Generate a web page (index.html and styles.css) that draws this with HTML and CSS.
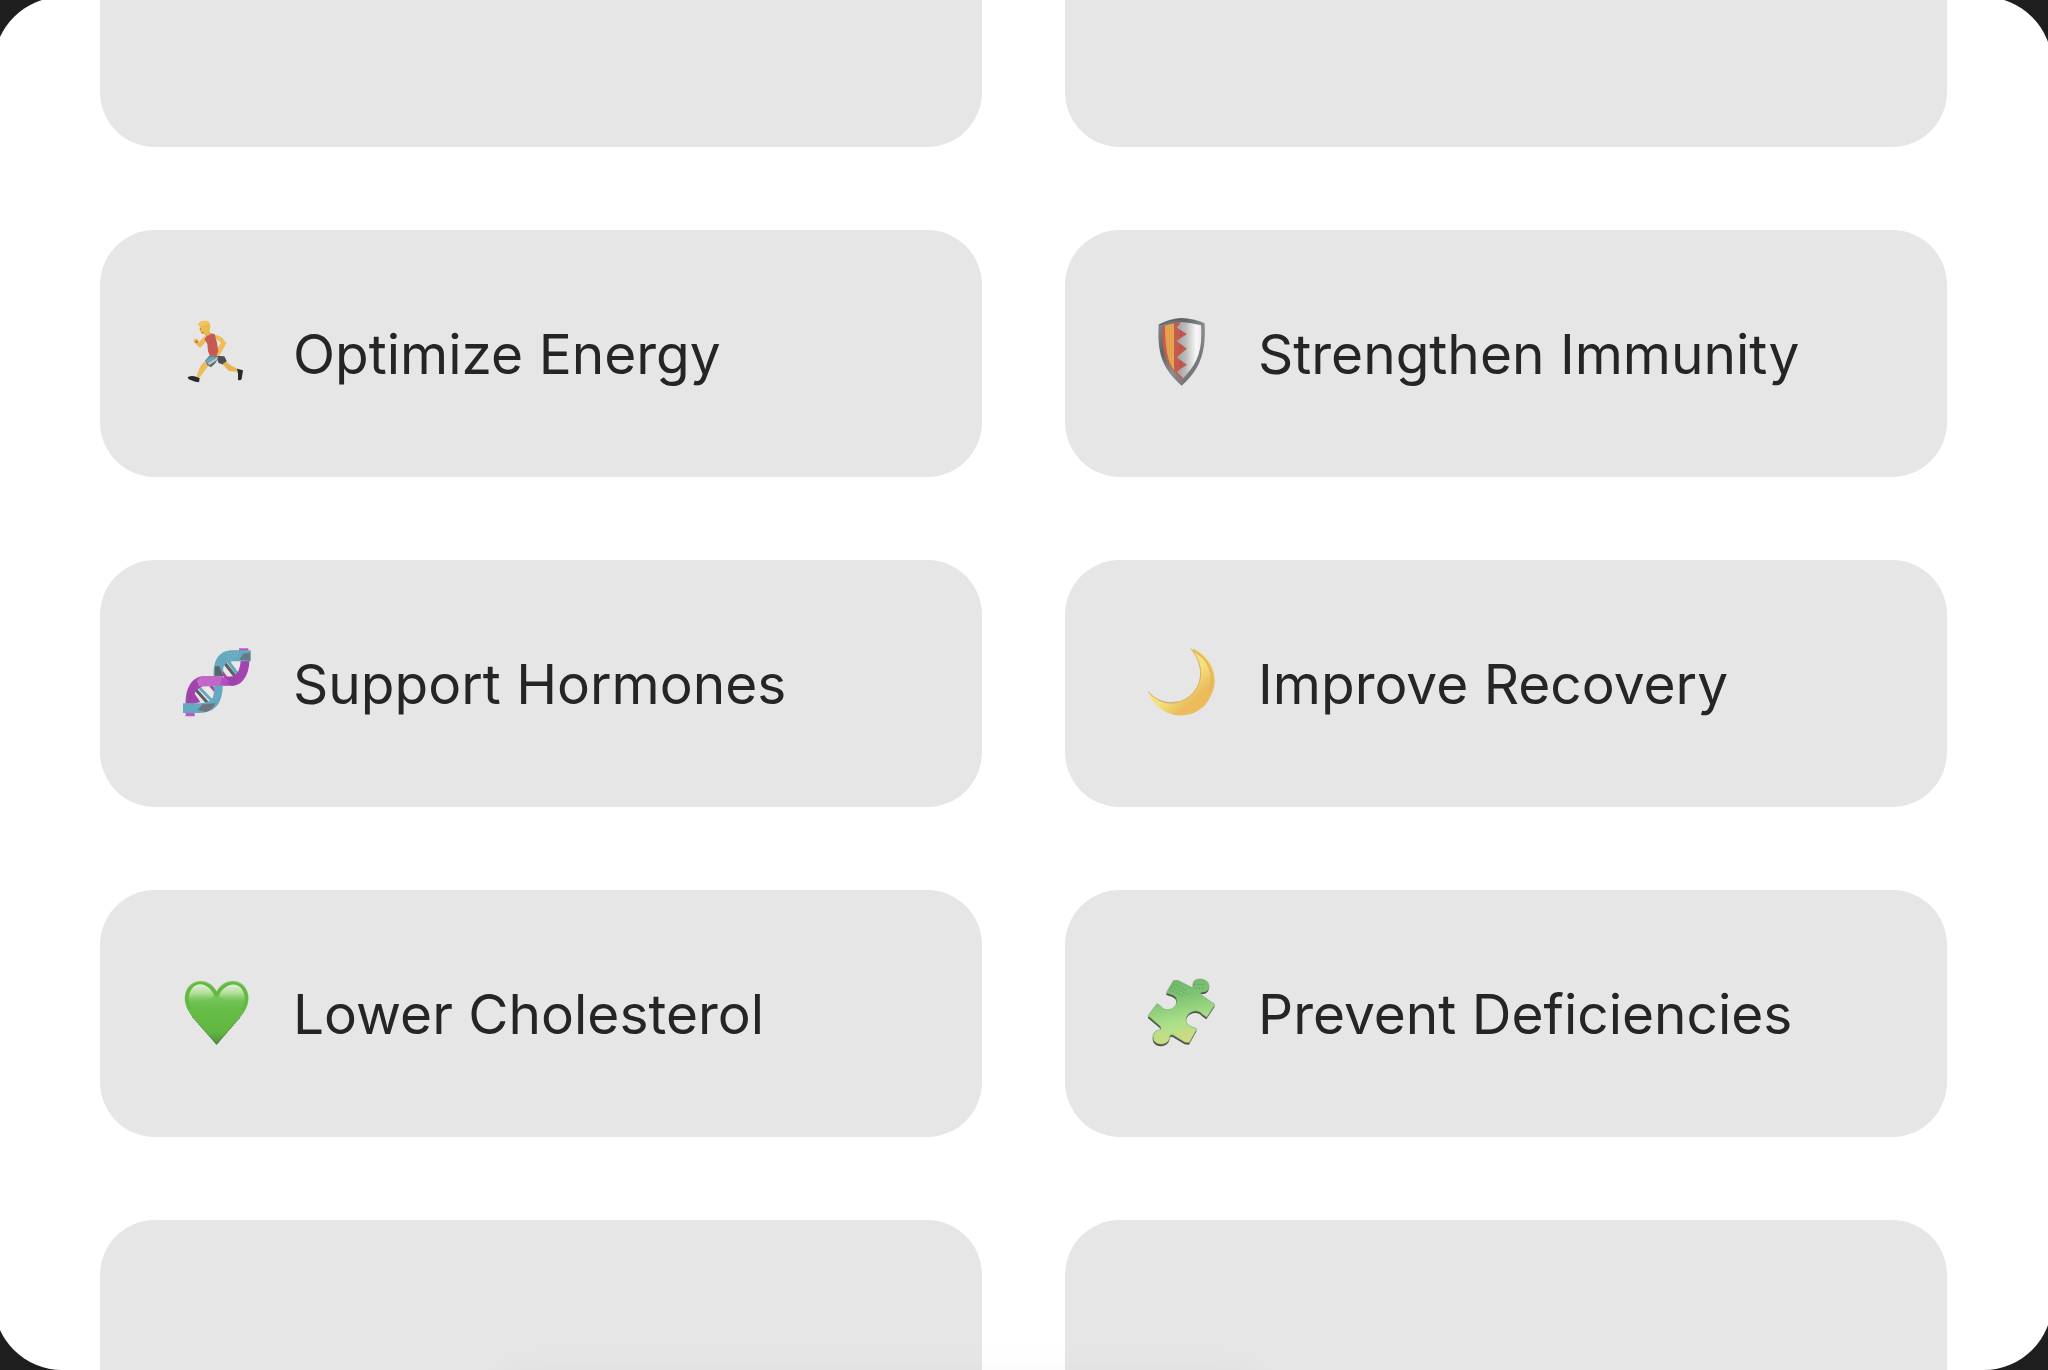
FILE: index.html
```html
<!DOCTYPE html>
<html lang="en">
    <head>
        <meta charset="UTF-8">
        <title>Health Goals</title>
        <link rel="stylesheet" href="styles.css">
    </head>
    <body>
        <main class="panel">
            <div class="goal"></div>
            <div class="goal"></div>

            <button class="goal" type="button">
                <svg class="icon" viewBox="66 52 222 222" aria-hidden="true">
                    <path d="M168 168 L193 170 L200 184 L193 196 L176 190 Z" fill="#4c4e51"/>
                    <path d="M187 193 L199 186 L214 198 L234 208 L231 216 L207 214 Z" fill="#e9b44f"/>
                    <path d="M231 207 L249 212 L245 238 Q240 244 234 240 L234 222 Z" fill="#28292b"/>
                    <path d="M132 186 L148 196 L136 210 L120 233 L110 231 Q116 202 132 186 Z" fill="#edbc58"/>
                    <path d="M83 232 Q96 227 108 231 L119 235 L117 248 L106 246 L86 239 Z" fill="#28292b"/>
                    <path d="M135 184 L148 168 L176 168 Q174 185 153 203 L142 196 Z" fill="#606468"/>
                    <path d="M136 185 L149 171 L170 170 L143 192 Z" fill="#65a9be"/>
                    <path d="M143 191 L174 170 L171 181 L148 197 Z" fill="#b9c3c8"/>
                    <path d="M137 116 L135 129 L121 144 Q113 142 108 132 L101 126 Q99 119 105 117 L114 119 L116 128 L134 110 Z" fill="#edb956"/>
                    <path d="M105 126 L111 122 L114 128 L108 131 Z" fill="#c85c4e"/>
                    <path d="M160 105 Q185 105 199 130 L188 151 L178 168 L170 164 L174 142 L183 130 L168 118 Z" fill="#efbd5a"/>
                    <path d="M138 108 Q151 98 164 104 L171 129 L175 155 L169 169 L149 168 L144 154 L142 133 L134 120 Z" fill="#c55b52"/>
                    <path d="M132 101 L148 95 L153 103 L138 111 Z" fill="#e5ac50"/>
                    <path d="M114 73 Q125 60 142 64 Q151 69 151 82 L148 99 Q139 107 130 103 Q121 101 119 88 L120 80 Q114 79 114 73 Z" fill="#edb952"/>
                    <path d="M115 74 Q126 62 142 65 L146 73 Q136 79 120 80 Z" fill="#f2c75c"/>
                    <path d="M121 86v4M125 99h5" stroke="#a84b55" stroke-width="3"/>
                </svg>
                <span>Optimize Energy</span>
            </button>
            <button class="goal" type="button">
                <svg class="icon" viewBox="50 52 222 222" aria-hidden="true">
                    <defs>
                        <linearGradient id="rim" x1="0" y1="0" x2="1" y2="1">
                            <stop offset="0" stop-color="#8c8f90"/>
                            <stop offset=".3" stop-color="#5f6466"/>
                            <stop offset=".55" stop-color="#8b8e8f"/>
                            <stop offset="1" stop-color="#595d60"/>
                        </linearGradient>
                        <linearGradient id="steel">
                            <stop offset="0" stop-color="#9c9c9c"/>
                            <stop offset=".35" stop-color="#bdbdbd"/>
                            <stop offset=".7" stop-color="#f8f8f8"/>
                            <stop offset="1" stop-color="#e0e0e0"/>
                        </linearGradient>
                        <clipPath id="shieldFace">
                            <path d="M154 67 Q127 69 97 80 C91 151 104 190 154 240 C199 197 218 154 212 77 Q184 70 154 67 Z"/>
                        </clipPath>
                    </defs>
                    <path d="M154 55 Q119 56 85 74 C81 154 91 204 154 258 C216 203 226 149 223 71 Q188 56 154 55 Z" fill="url(#rim)"/>
                    <path d="M154 58 Q121 59 88 76" fill="none" stroke="#555b5e" stroke-width="3"/>
                    <g clip-path="url(#shieldFace)">
                        <path d="M135 60h90v190h-90z" fill="url(#steel)"/>
                        <path d="M80 60 L158 60 L139 84 L170 103 L139 124 L170 147 L139 173 L170 195 L139 216 L165 242 H80 Z" fill="#c55b50"/>
                        <path d="M104 76 Q117 71 131 71 L131 212 Q104 180 104 76 Z" fill="#e6a84f"/>
                        <path d="M110 75v112M117 73v128M124 72v137" stroke="#d6804f" stroke-width="2" stroke-dasharray="3 3"/>
                        <path d="M151 94v17M151 138v16M151 187v15" stroke="#704d50" stroke-width="3" stroke-dasharray="3 3"/>
                    </g>
                </svg>
                <span>Strengthen Immunity</span>
            </button>

            <button class="goal" type="button">
                <svg class="icon" viewBox="66 50 222 222" aria-hidden="true">
                    <path d="M237 54h28v14h-28zM77 244h27v14H77z" fill="#bd59c5"/>
                    <path d="M108 170 L189 138 L190 210 L135 226 Z M188 99 L218 88 L244 93 L242 137 L190 140 Z" fill="#e9e9ea"/>
                    <path d="M189 92 L224 136" stroke="#5e6263" stroke-width="10"/>
                    <path d="M204 92 L235 134" stroke="#65a9c1" stroke-width="9"/>
                    <path d="M180 116 L199 143" stroke="#a942b4" stroke-width="9"/>
                    <path d="M103 173 L145 220" stroke="#595d60" stroke-width="9"/>
                    <path d="M119 173 L160 216" stroke="#65a9c1" stroke-width="9"/>
                    <path d="M152 166 L174 191" stroke="#a942b4" stroke-width="9"/>
                    <path d="M242 92 L268 87 C269 126 252 164 218 167 L185 164 L194 139 L220 138 Q240 127 242 92 Z" fill="#a343ad"/>
                    <path d="M77 220 C76 172 97 139 131 138 L187 138 L205 166 L128 168 Q107 178 104 190 L121 215 L101 220 Z" fill="#a343ad"/>
                    <path d="M110 151 Q119 138 137 138 L186 138 L205 166 L117 168 Z" fill="#c46aca"/>
                    <path d="M69 219 H119 Q151 216 158 202 C164 188 161 168 165 145 L189 136 L188 177 C184 220 166 247 118 248 H69 Z" fill="#66a8bf"/>
                    <path d="M113 239 L127 222 L166 219 Q158 239 137 245 Z" fill="#6d777c"/>
                    <path d="M161 137 C159 86 179 60 219 60 H272 V93 H218 Q192 96 190 112 L187 141 Z" fill="#66a8bf"/>
                    <path d="M165 108 L178 108 L190 137 L164 136 Z" fill="#5c6468"/>
                    <path d="M238 88 L250 70 L271 66 V91 Z" fill="#657b86"/>
                    <path d="M124 138 H186 L206 152 L203 165 L124 167 Z" fill="#c067c7"/>
                    <path d="M187 140 L206 152 L203 165 L180 164 Z" fill="#b54fbe"/>
                    <path d="M197 77h31M204 69h30M205 85h15" stroke="#b6ced6" stroke-width="2" stroke-dasharray="3 6"/>
                    <path d="M207 149h25M201 158h25M90 188v22" stroke="#73467c" stroke-width="3" stroke-dasharray="3 4"/>
                </svg>
                <span>Support Hormones</span>
            </button>
            <button class="goal" type="button">
                <svg class="icon" viewBox="50 50 222 222" aria-hidden="true">
                    <defs>
                        <linearGradient id="moon" x1=".3" y1=".3" x2=".75" y2=".8">
                            <stop offset=".45" stop-color="#f4e27d"/>
                            <stop offset=".9" stop-color="#ecbc5c"/>
                        </linearGradient>
                    </defs>
                    <path d="M182 55 C244 70 271 142 241 198 C205 280 84 273 53 184 C88 219 125 229 166 206 C211 180 232 117 182 55 Z" fill="url(#moon)"/>
                    <path d="M182 55 C232 117 211 180 166 206 C125 229 88 219 53 184" fill="none" stroke="#d9ae59" stroke-width="3"/>
                    <path d="M188 59 C232 82 258 127 237 181" fill="none" stroke="#e7b75b" stroke-width="7"/>
                    <path d="M84 209 Q112 221 142 214" fill="none" stroke="#b5a49a" stroke-width="2"/>
                </svg>
                <span>Improve Recovery</span>
            </button>

            <button class="goal" type="button">
                <svg class="icon" viewBox="66 48 222 222" aria-hidden="true">
                    <defs>
                        <linearGradient id="heart" x1="0" y1="0" x2="0" y2="1">
                            <stop offset="0" stop-color="#8ed076"/>
                            <stop offset=".45" stop-color="#66bd47"/>
                            <stop offset=".8" stop-color="#61b641"/>
                            <stop offset="1" stop-color="#4f8841"/>
                        </linearGradient>
                        <linearGradient id="gloss" x1="0" y1="0" x2="0" y2="1">
                            <stop offset="0" stop-color="#e2efd9"/>
                            <stop offset=".5" stop-color="#b3df98"/>
                            <stop offset="1" stop-color="#80ca66" stop-opacity="0"/>
                        </linearGradient>
                    </defs>
                    <path d="M170 252 L97 168 C79 145 72 123 75 103 C82 50 147 44 170 91 C194 44 258 51 265 103 C268 123 259 148 242 167 Z" fill="url(#heart)"/>
                    <path d="M170 105 C151 54 91 56 81 103 Q78 123 91 145 M170 105 C190 54 249 56 259 103 Q262 123 249 145" fill="none" stroke="#61b842" stroke-width="9"/>
                    <path d="M87 120 C83 62 141 51 163 106 Q124 132 87 120 Z M177 106 C197 53 258 61 253 119 Q215 132 177 106 Z" fill="url(#gloss)"/>
                    <path d="M97 168 L169 249 L241 169" fill="none" stroke="#526a50" stroke-width="3" stroke-dasharray="3 4"/>
                </svg>
                <span>Lower Cholesterol</span>
            </button>
            <button class="goal" type="button">
                <svg class="icon" viewBox="50 48 222 222" aria-hidden="true">
                    <defs>
                        <linearGradient id="puzzle" x1=".4" y1="0" x2=".6" y2="1">
                            <stop offset="0" stop-color="#6fb56a"/>
                            <stop offset=".3" stop-color="#80c675"/>
                            <stop offset=".65" stop-color="#abe08a"/>
                            <stop offset="1" stop-color="#d4dc83"/>
                        </linearGradient>
                        <path id="piece" d="M129 59 L142 58 L184 79 Q192 77 188 66 C192 50 223 50 233 65 C242 82 230 94 216 93 Q206 95 215 103 L254 131 L229 169 L216 160 C205 143 175 149 169 169 C164 183 171 191 181 196 L200 204 L177 245 L164 244 L128 222 Q117 219 118 232 C113 252 83 256 71 239 C62 221 75 207 87 207 Q96 204 89 195 L53 164 L80 128 L91 135 C102 154 134 147 139 126 C142 111 135 106 127 102 L108 95 Z"/>
                    </defs>
                    <use href="#piece" x="-1" y="6" fill="#4d4e4a"/>
                    <use href="#piece" fill="url(#puzzle)" stroke="#78ae6a" stroke-width="2"/>
                    <path d="M129 69l42 20M123 78l50 23M192 70l32 1M196 82l25 0M118 86l44 20" stroke="#558c5b" stroke-width="3" stroke-dasharray="3 7"/>
                    <path d="M145 210l39 1M147 220l34 1M158 231l20 1M84 225l24-4" stroke="#edcb78" stroke-width="4" stroke-dasharray="4 5"/>
                </svg>
                <span>Prevent Deficiencies</span>
            </button>

            <div class="goal"></div>
            <div class="goal"></div>
        </main>
        <div class="dock"></div>
    </body>
</html>
```
FILE: styles.css
```css
* {
    box-sizing: border-box;
}
body {
    margin: 0;
    height: 100vh;
    display: flex;
    overflow: hidden;
    background-color: #1e1e1e;
    font-family: Inter, "Liberation Sans", sans-serif;
}
.panel {
    flex: 1;
    display: grid;
    grid-template-columns: 1fr 1fr;
    grid-auto-rows: 247px;
    align-content: center;
    gap: 83px;
    margin: -3px -4px 0 -6px;
    padding: 0 105px 0 106px;
    overflow: hidden;
    background-color: white;
    border-radius: 68px;
}
.goal {
    display: flex;
    align-items: center;
    gap: 37px;
    padding: 0 82px;
    border: none;
    border-radius: 55px;
    background-color: #e6e6e6;
    color: #252525;
    font-family: inherit;
    font-size: 55px;
    line-height: 72px;
    text-align: left;
    white-space: nowrap;
}
.icon {
    flex: none;
    width: 74px;
    height: 74px;
}
/* sits just under the window, only its shadow shows */
.dock {
    position: absolute;
    top: 100%;
    left: 24%;
    right: 38%;
    height: 80px;
    border-radius: 40px;
    box-shadow: 0 0 36px rgba(0, 0, 0, 0.03);
}
```
